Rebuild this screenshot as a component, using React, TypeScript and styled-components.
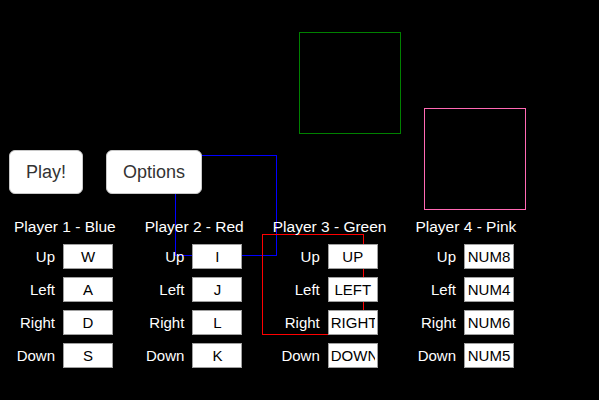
import React from "react";
import styled, { createGlobalStyle } from "styled-components";

const Global = createGlobalStyle`
  html, body { margin: 0; padding: 0; background: #000; }
  body { font-family: "Liberation Sans", Arial, sans-serif; }
`;

const Stage = styled.div`
  position: relative;
  width: 599px;
  height: 400px;
  overflow: hidden;
  background: #000;
`;

const GameCanvas = styled.svg`
  position: absolute;
  left: 0;
  top: 0;
  width: 599px;
  height: 400px;
  z-index: 0;
`;

const Menu = styled.div`
  position: relative;
  z-index: 1;
  display: flex;
  flex-direction: column;
  padding-top: 150px;
`;

const ButtonBar = styled.div`
  display: flex;
  gap: 23px;
  padding-left: 9px;
`;

const MenuButton = styled.button`
  height: 44px;
  padding: 0 16px;
  background: #fff;
  border: 1px solid #c8c8c8;
  border-radius: 6px;
  color: #333;
  font-family: "Liberation Sans", Arial, sans-serif;
  font-size: 18px;
  cursor: pointer;
`;

const PlayersRow = styled.div`
  display: flex;
  align-items: flex-start;
  gap: 29px;
  padding-left: 14px;
  margin-top: 24px;
`;

const PlayerColumn = styled.div`
  display: flex;
  flex-direction: column;
  align-items: center;
`;

const PlayerTitle = styled.div`
  color: #fff;
  font-size: 15.5px;
  line-height: 17px;
  white-space: nowrap;
`;

const KeyGrid = styled.div`
  display: grid;
  grid-template-columns: auto 50px;
  column-gap: 8px;
  row-gap: 8px;
  margin-top: 9px;
  align-items: center;
`;

const KeyLabel = styled.span`
  color: #fff;
  font-size: 15px;
  justify-self: end;
  white-space: nowrap;
`;

const KeyInput = styled.input`
  box-sizing: border-box;
  width: 50px;
  height: 25px;
  padding: 1px 2px;
  border: 1px solid #a0a0a0;
  background: #fff;
  color: #000;
  font-family: "Liberation Sans", Arial, sans-serif;
  font-size: 15px;
  text-align: center;
  outline: none;
`;

type Player = { title: string; keys: [string, string][] };

const players: Player[] = [
  { title: "Player 1 - Blue", keys: [["Up", "W"], ["Left", "A"], ["Right", "D"], ["Down", "S"]] },
  { title: "Player 2 - Red", keys: [["Up", "I"], ["Left", "J"], ["Right", "L"], ["Down", "K"]] },
  { title: "Player 3 - Green", keys: [["Up", "UP"], ["Left", "LEFT"], ["Right", "RIGHT"], ["Down", "DOWN"]] },
  { title: "Player 4 - Pink", keys: [["Up", "NUM8"], ["Left", "NUM4"], ["Right", "NUM6"], ["Down", "NUM5"]] },
];

export default function App() {
  return (
    <Stage>
      <Global />
      <GameCanvas viewBox="0 0 599 400" shapeRendering="crispEdges">
        <g fill="#0000ff">
          <rect x={190} y={155} width={87} height={1} />
          <rect x={276} y={155} width={1} height={101} />
          <rect x={175} y={255} width={102} height={1} />
          <rect x={175} y={190} width={1} height={66} />
        </g>
        <g fill="#ff0000">
          <rect x={262} y={234} width={102} height={1} />
          <rect x={363} y={234} width={1} height={101} />
          <rect x={262} y={334} width={102} height={1} />
          <rect x={262} y={234} width={1} height={101} />
        </g>
        <rect x={299.5} y={32.5} width={101} height={101} fill="none" stroke="#008000" />
        <rect x={424.5} y={108.5} width={101} height={101} fill="none" stroke="#ff69b4" />
      </GameCanvas>
      <Menu>
        <ButtonBar>
          <MenuButton>Play!</MenuButton>
          <MenuButton>Options</MenuButton>
        </ButtonBar>
        <PlayersRow>
          {players.map((p) => (
            <PlayerColumn key={p.title}>
              <PlayerTitle>{p.title}</PlayerTitle>
              <KeyGrid>
                {p.keys.map(([label, value]) => (
                  <React.Fragment key={label}>
                    <KeyLabel>{label}</KeyLabel>
                    <KeyInput readOnly value={value} />
                  </React.Fragment>
                ))}
              </KeyGrid>
            </PlayerColumn>
          ))}
        </PlayersRow>
      </Menu>
    </Stage>
  );
}
